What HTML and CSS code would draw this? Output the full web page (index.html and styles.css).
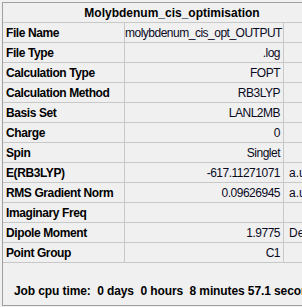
FILE: index.html
```html
<!DOCTYPE html>
<html lang="en">
<head>
  <meta charset="UTF-8" />
  <title>Molybdenum_cis_optimisation</title>
  <link rel="stylesheet" href="styles.css">
</head>
<body>
  <div class="panel">
    <table class="summary">
      <colgroup>
        <col class="col-label">
        <col class="col-value">
        <col class="col-unit">
      </colgroup>
      <tr>
        <th class="title" colspan="3">Molybdenum_cis_optimisation</th>
      </tr>
      <tr><td class="label">File Name</td><td class="value">molybdenum_cis_opt_OUTPUT</td><td class="unit"></td></tr>
      <tr><td class="label">File Type</td><td class="value">.log</td><td class="unit"></td></tr>
      <tr><td class="label">Calculation Type</td><td class="value">FOPT</td><td class="unit"></td></tr>
      <tr><td class="label">Calculation Method</td><td class="value">RB3LYP</td><td class="unit"></td></tr>
      <tr><td class="label">Basis Set</td><td class="value">LANL2MB</td><td class="unit"></td></tr>
      <tr><td class="label">Charge</td><td class="value">0</td><td class="unit"></td></tr>
      <tr><td class="label">Spin</td><td class="value">Singlet</td><td class="unit"></td></tr>
      <tr><td class="label">E(RB3LYP)</td><td class="value">-617.11271071</td><td class="unit">a.u.</td></tr>
      <tr><td class="label">RMS Gradient Norm</td><td class="value">0.09626945</td><td class="unit">a.u.</td></tr>
      <tr><td class="label">Imaginary Freq</td><td class="value"></td><td class="unit"></td></tr>
      <tr><td class="label">Dipole Moment</td><td class="value">1.9775</td><td class="unit">Debye</td></tr>
      <tr><td class="label">Point Group</td><td class="value">C1</td><td class="unit"></td></tr>
    </table>
    <div class="cpu-time">Job cpu time:  0 days  0 hours  8 minutes 57.1 seconds.</div>
  </div>
</body>
</html>
```

FILE: styles.css
```css
* {
  margin: 0;
  padding: 0;
  box-sizing: border-box;
}

body {
  background: #f0f0f0;
  overflow: hidden;
  font-family: 'Liberation Sans', Arial, sans-serif;
  font-size: 12px;
  color: #000;
}

.panel {
  margin: 2px 0 0 2px;
  width: 340px;
  height: 304px;
  border: 1px solid #a0a0a0;
  background: #f0f0f0;
}

.summary {
  border-collapse: separate;
  border-spacing: 0;
  width: 338px;
  table-layout: fixed;
}

.col-label {
  width: 122px;
}

.col-value {
  width: 159px;
}

.col-unit {
  width: 57px;
}

.summary th,
.summary td {
  height: 20px;
  border-bottom: 1px solid #c8c8c8;
  white-space: nowrap;
  overflow: hidden;
  line-height: 18px;
}

.title {
  font-weight: bold;
  text-align: center;
}

/* bold captions in the left column */
.label {
  padding-left: 3px;
  font-weight: bold;
  letter-spacing: -0.4px;
  border-right: 1px solid #c8c8c8;
}

.value {
  padding-right: 3px;
  text-align: right;
  letter-spacing: -0.5px;
  color: #0a0a1e;
  border-right: 1px solid #c8c8c8;
}

.unit {
  padding-left: 5px;
  color: #0a0a1e;
}

.cpu-time {
  padding: 21px 0 0 11px;
  font-weight: bold;
  letter-spacing: -0.1px;
  white-space: pre;
}
```
